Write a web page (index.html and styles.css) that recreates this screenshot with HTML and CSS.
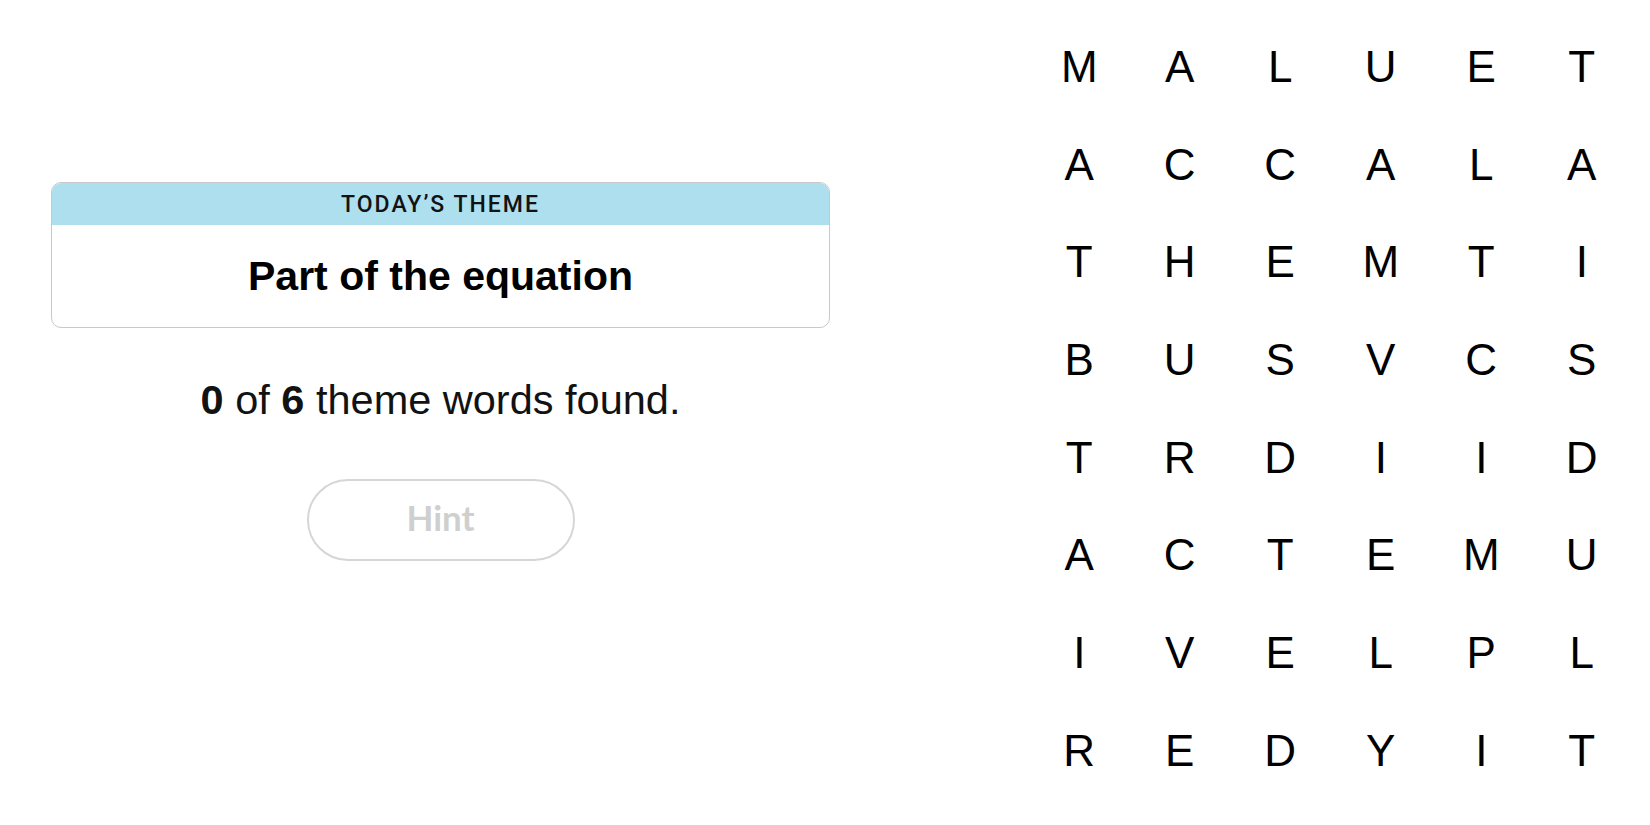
FILE: index.html
```html
<!DOCTYPE html>
<html lang="en">
<head>
<meta charset="utf-8">
<title>Strands</title>
<link rel="stylesheet" href="styles.css">
</head>
<body>
<main class="page">
  <section class="left">
    <div class="theme-card">
      <div class="theme-head">TODAY’S THEME</div>
      <div class="theme-body">Part of the equation</div>
    </div>
    <p class="progress"><b>0</b> of <b>6</b> theme words found.</p>
    <button class="hint" type="button">Hint</button>
  </section>
  <section class="board">
    <span>M</span><span>A</span><span>L</span><span>U</span><span>E</span><span>T</span>
    <span>A</span><span>C</span><span>C</span><span>A</span><span>L</span><span>A</span>
    <span>T</span><span>H</span><span>E</span><span>M</span><span>T</span><span>I</span>
    <span>B</span><span>U</span><span>S</span><span>V</span><span>C</span><span>S</span>
    <span>T</span><span>R</span><span>D</span><span>I</span><span>I</span><span>D</span>
    <span>A</span><span>C</span><span>T</span><span>E</span><span>M</span><span>U</span>
    <span>I</span><span>V</span><span>E</span><span>L</span><span>P</span><span>L</span>
    <span>R</span><span>E</span><span>D</span><span>Y</span><span>I</span><span>T</span>
  </section>
</main>
</body>
</html>
```
FILE: styles.css
```css
html, body {
  margin: 0;
  padding: 0;
  background: #ffffff;
}

body {
  font-family: "Liberation Sans", Arial, sans-serif;
  color: #121212;
}

.page {
  display: flex;
  align-items: flex-start;
  padding-left: 51px;
  gap: 199px;
}

.left {
  width: 779px;
  padding-top: 182px;
  display: flex;
  flex-direction: column;
  align-items: center;
}

.theme-card {
  width: 100%;
  box-sizing: border-box;
  border: 1px solid #c9c9c9;
  border-radius: 10px;
  overflow: hidden;
}

.theme-head {
  height: 42px;
  background: #aedfee;
  display: flex;
  align-items: center;
  justify-content: center;
  font-family: Roboto, "Liberation Sans", sans-serif;
  font-weight: 500;
  font-size: 23px;
  letter-spacing: 2px;
  color: #121212;
  padding-top: 1px;
  box-sizing: border-box;
}

.theme-body {
  height: 102px;
  display: flex;
  align-items: center;
  justify-content: center;
  font-weight: 700;
  font-size: 41px;
  color: #000;
}

.progress {
  margin: 48px 0 0;
  font-size: 41.5px;
  line-height: 48px;
  color: #121212;
}

.progress b {
  font-weight: 700;
}

.hint {
  margin-top: 55px;
  width: 268px;
  height: 82px;
  border: 2px solid #d6d6d6;
  border-radius: 41px;
  background: #fff;
  font-family: Lato, "Liberation Sans", sans-serif;
  font-weight: 700;
  font-size: 35px;
  color: #cfcfcf;
  padding: 0 0 6px;
}

.board {
  padding-top: 18px;
  display: grid;
  grid-template-columns: repeat(6, 100.5px);
  grid-auto-rows: 97.7px;
}

.board span {
  display: flex;
  align-items: center;
  justify-content: center;
  font-size: 44px;
  color: #000;
}
```
